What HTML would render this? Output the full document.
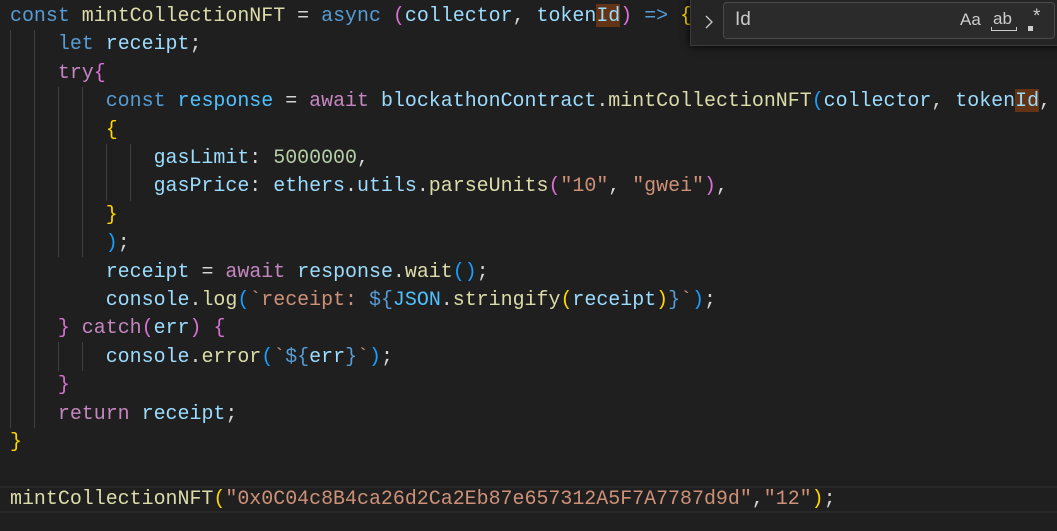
<!DOCTYPE html>
<html><head><meta charset="utf-8"><style>
body{margin:0;width:1057px;height:531px;background:#1f1f1f;overflow:hidden;position:relative;font-family:"Liberation Mono",monospace;}
#code{position:absolute;left:10px;top:2px;font-size:19.95px;line-height:28.41px;white-space:pre;color:#d4d4d4;}
.k{color:#569cd6}.f{color:#dcdcaa}.v{color:#9cdcfe}.c{color:#4fc1ff}.p{color:#c586c0}.s{color:#ce9178}.n{color:#b5cea8}
.y{color:#ffd700}.m{color:#da70d6}.b{color:#179fff}.h{background:#623315}
.g{position:absolute;width:1px;background:#404040}
.cur{position:absolute;left:0;top:486px;width:1057px;height:27px;border-top:2px solid #282828;border-bottom:2px solid #282828;box-sizing:border-box}
#find{position:absolute;left:690px;top:-2px;width:380px;height:46px;background:#252526;border:1px solid #3c3c3c;box-shadow:0 0 8px #000;}
#inp{position:absolute;left:32px;top:3px;width:330px;height:35px;background:#2b2b2b;border:1px solid #4a4a4a;border-radius:4px;font-family:"Liberation Sans",sans-serif;color:#ccc;}
</style></head><body>
<div class="cur"></div>
<div class="g" style="left:10px;top:30px;height:398px"></div>
<div class="g" style="left:34px;top:30px;height:398px"></div>
<div class="g" style="left:58px;top:87px;height:170px"></div>
<div class="g" style="left:82px;top:87px;height:170px"></div>
<div class="g" style="left:58px;top:342px;height:29px"></div>
<div class="g" style="left:82px;top:342px;height:29px"></div>
<div class="g" style="left:106px;top:144px;height:57px"></div>
<div class="g" style="left:130px;top:144px;height:57px"></div>
<div id="code"><span class="k">const</span> <span class="f">mintCollectionNFT</span> = <span class="k">async</span> <span class="m">(</span><span class="v">collector</span>, <span class="v">token<span class="h">Id</span></span><span class="m">)</span> <span class="k">=&gt;</span> <span class="y">{</span>
    <span class="k">let</span> <span class="v">receipt</span>;
    <span class="p">try</span><span class="m">{</span>
        <span class="k">const</span> <span class="c">response</span> = <span class="p">await</span> <span class="v">blockathonContract</span>.<span class="f">mintCollectionNFT</span><span class="b">(</span><span class="v">collector</span>, <span class="v">token<span class="h">Id</span></span>,
        <span class="y">{</span>
            <span class="v">gasLimit</span>: <span class="n">5000000</span>,
            <span class="v">gasPrice</span>: <span class="v">ethers</span>.<span class="v">utils</span>.<span class="f">parseUnits</span><span class="m">(</span><span class="s">"10"</span>, <span class="s">"gwei"</span><span class="m">)</span>,
        <span class="y">}</span>
        <span class="b">)</span>;
        <span class="v">receipt</span> = <span class="p">await</span> <span class="v">response</span>.<span class="f">wait</span><span class="b">()</span>;
        <span class="v">console</span>.<span class="f">log</span><span class="b">(</span><span class="s">`receipt: </span><span class="k">${</span><span class="c">JSON</span>.<span class="f">stringify</span><span class="y">(</span><span class="v">receipt</span><span class="y">)</span><span class="k">}</span><span class="s">`</span><span class="b">)</span>;
    <span class="m">}</span> <span class="p">catch</span><span class="m">(</span><span class="v">err</span><span class="m">)</span> <span class="m">{</span>
        <span class="v">console</span>.<span class="f">error</span><span class="b">(</span><span class="s">`</span><span class="k">${</span><span class="v">err</span><span class="k">}</span><span class="s">`</span><span class="b">)</span>;
    <span class="m">}</span>
    <span class="p">return</span> <span class="v">receipt</span>;
<span class="y">}</span>

<span class="f">mintCollectionNFT</span><span class="y">(</span><span class="s">"0x0C04c8B4ca26d2Ca2Eb87e657312A5F7A7787d9d"</span>,<span class="s">"12"</span><span class="y">)</span>;</div>
<div id="find">
<svg style="position:absolute;left:12px;top:14px" width="12" height="18"><path d="M3 3 L9 9 L3 15" stroke="#ccc" stroke-width="1.3" fill="none"/></svg>
<div id="inp">
<span style="position:absolute;left:11px;top:6px;font-size:19px">Id</span>
<span style="position:absolute;left:236px;top:7px;font-size:17px">Aa</span>
<span style="position:absolute;left:269px;top:6px;font-size:17px">ab</span>
<div style="position:absolute;left:267px;top:24px;width:24px;height:3px;border:1px solid #ccc;border-top:none"></div>
<div style="position:absolute;left:304px;top:23px;width:5px;height:5px;background:#ccc"></div>
<span style="position:absolute;left:309px;top:3px;font-size:19px">*</span>
</div></div>
</body></html>
